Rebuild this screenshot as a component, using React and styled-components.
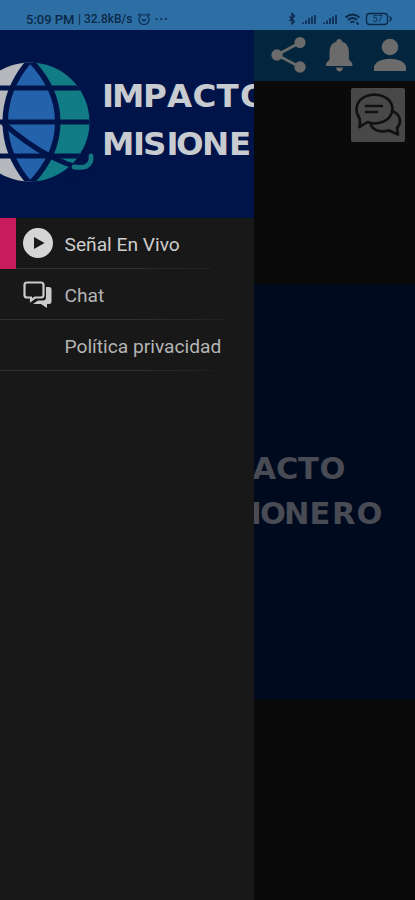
import React from "react";
import styled, { createGlobalStyle } from "styled-components";

const menuItems = [
  { label: "Señal En Vivo", icon: "play", active: true, line: 212 },
  { label: "Chat", icon: "chat", line: 225 },
  { label: "Política privacidad", line: 212 },
];

const TitleLines = ({ lines, size, color }) => (
  <g fill={color} fontFamily="'DejaVu Sans', sans-serif" fontWeight="700" fontSize={size}>
    {lines.map((l) => (
      <text key={l.text} x={l.x.join(" ")} y={l.y}>{l.text}</text>
    ))}
  </g>
);

const StatusIcons = () => (
  <svg width="110" height="16" viewBox="284 11 110 16" fill="none" stroke="#0b2848">
    <path d="M289.5 16.5l5 5-2.5 2.5V13.5l2.5 2.5-5 5" strokeWidth="1.3" />
    <path d="M303 24v-1.5M306 24v-3.5M309 24v-6M312 24v-7.5M315 24v-9" strokeWidth="2" opacity="0.8" />
    <path d="M324 24v-1.5M327 24v-3.5M330 24v-6M333 24v-7.5M336 24v-9" strokeWidth="2" opacity="0.8" />
    <path d="M345.5 17.5q7-6 14 0M348 20q4.5-4 9 0M350.5 22.5q2-1.8 4 0M356.5 22.5l2 2" strokeWidth="1.8" />
    <rect x="366.5" y="13.5" width="21" height="11" rx="3" strokeWidth="1.3" />
    <path d="M389.500 16.500l2 2.300-2 2.500" strokeWidth="1.3" />
    <text x="372.5" y="22.3" fill="#0b2848" stroke="none" fontSize="9" fontFamily="Roboto, sans-serif">57</text>
  </svg>
);

const AlarmIcon = () => (
  <svg width="14" height="14" viewBox="0 0 14 14" fill="none" stroke="#0b2848" strokeWidth="1.1">
    <circle cx="7" cy="7.5" r="5" />
    <path d="M1 3.5l2.5-2M13 3.5l-2.5-2M4.8 7l2.2 2 2.2-2" />
  </svg>
);

const Globe = () => (
  <>
    <clipPath id="globe"><circle cx="30" cy="92" r="59.5" /></clipPath>
    <g clipPath="url(#globe)">
      <rect x="-30" y="32" width="60" height="120" fill="#b5b9bd" />
      <rect x="30" y="32" width="60" height="120" fill="#117b86" />
      <path d="M30 30C-3 68-3 116 30 154C67 116 67 68 30 30Z" fill="#2462ab" stroke="#001449" strokeWidth="5.5" />
      <path d="M-30 58H90M-30 92H90M-30 126H90" stroke="#001449" strokeWidth="5" />
    </g>
    <path d="M68 138L79 128L82 120L92 118V142L66 150Z" fill="#001449" />
    <path d="M3 93Q28 115 50 126T74 135" fill="none" stroke="#001449" strokeWidth="5" />
    <path d="M74 137Q82 138 86 136.500Q92 133 91 126" fill="none" stroke="#127683" strokeWidth="4.8" strokeLinecap="round" />
  </>
);

const MenuIcon = ({ name }) => {
  if (name === "play")
    return (
      <svg width="30" height="30" viewBox="0 0 30 30">
        <circle cx="15" cy="15" r="15" fill="#d5d5d5" />
        <path d="M11 9v12l10.5-6z" fill="#181818" />
      </svg>
    );
  if (name === "chat")
    return (
      <svg width="30" height="30" viewBox="0 0 30 30">
        <path d="M23 8h3q2.500 0 2.500 2.500v12q0 2.500-2.500 2.500h-2v4l-6-4h-8l5-3.500h5q3 0 3-3.500z" fill="#cbcbcb" />
        <path d="M4 3.500h14q2.500 0 2.500 2.500v10q0 2.500-2.500 2.500h-6l-4 3v-3H4q-2.500 0-2.500-2.500V6Q1.500 3.500 4 3.500z" fill="#181818" stroke="#cbcbcb" strokeWidth="2.2" />
      </svg>
    );
  return null;
};

const ToolbarIcons = () => (
  <svg width="161" height="51" viewBox="254 30 161 51" fill="#6b6b6b">
    <path d="M300 42.5L277 55l23 12" fill="none" stroke="#6b6b6b" strokeWidth="2.8" />
    <circle cx="300" cy="42.5" r="5.5" />
    <circle cx="277" cy="55" r="5.7" />
    <circle cx="300" cy="67" r="5.7" />
    <path d="M326 66v-2.5l3.5-4V52q0-8.500 7-10.500 0-2.500 2.700-2.500t2.700 2.500q7 2 7 10.500v7.500l3.500 4V66zM336 67.500h7q-.5 4-3.500 4t-3.500-4z" />
    <circle cx="390" cy="47" r="8.3" />
    <path d="M374 71v-3q0-5 6-7.500 10-3.500 20 0 6 2.500 6 7.500v3z" />
  </svg>
);

const ChatIcon = () => (
  <svg width="54" height="54" viewBox="351 88 54 54" fill="none" stroke="#111" strokeWidth="2.7" strokeLinejoin="round" strokeLinecap="round">
    <path d="M359.5 118q-3-4-3-9 1-13 18-14.500 17 1.500 18 14.500-1 13-18 14.500-4 0-7-1.500-3 2-8 5 1-4 0-9z" />
    <path d="M366 106h16M366 112h11" />
    <path d="M392 111q8 3 8 10 0 4-3 7l1 6.500-9-4q-13 3-18-5" />
  </svg>
);

const App = () => (
  <Screen>
    <GlobalStyle />
    <StatusBar>
      <StatusLeft>
        <Time>5:09 PM</Time>
        <Speed>| 32.8kB/s</Speed>
        <AlarmIcon />
        <Dots>•••</Dots>
      </StatusLeft>
      <StatusIcons />
    </StatusBar>
    <Page>
      <Toolbar><ToolbarIcons /></Toolbar>
      <ChatArea>
        <ChatButton><ChatIcon /></ChatButton>
      </ChatArea>
      <Banner>
        <svg width="415" height="415" viewBox="0 284 415 415">
          <TitleLines
            size={30.5}
            color="#484b54"
            lines={[
              { text: "IMPACTO", x: [192, 201, 229, 252.5, 276, 298, 319.5], y: 479 },
              { text: "MISIONERO", x: [192, 221, 229, 250.5, 260, 284, 309.5, 332, 356.5], y: 524 },
            ]}
          />
        </svg>
      </Banner>
      <Drawer>
        <DrawerHeader>
          <svg width="254" height="188" viewBox="0 0 254 188">
            <Globe />
            <TitleLines
              size={32.5}
              color="#c8cbd0"
              lines={[
                { text: "IMPACTO", x: [102, 112, 143, 167, 192.5, 216.5, 240], y: 77 },
                { text: "MISIONERO", x: [102, 133, 143, 166.5, 176, 202, 229, 257, 281], y: 125 },
              ]}
            />
          </svg>
        </DrawerHeader>
        {menuItems.map((item) => (
          <MenuRow key={item.label} $line={item.line}>
            <Marker $active={item.active} />
            <IconSlot><MenuIcon name={item.icon} /></IconSlot>
            <Label $active={item.active}>{item.label}</Label>
          </MenuRow>
        ))}
      </Drawer>
    </Page>
  </Screen>
);

export default App;

// STYLES

const GlobalStyle = createGlobalStyle`
  body {
    margin: 0;
    background: #0a0a0a;
  }
  svg {
    display: block;
    flex-shrink: 0;
  }
`;

const Screen = styled.div`
  display: flex;
  flex-direction: column;
  width: 415px;
  height: 900px;
  overflow: hidden;
  font-family: Roboto, sans-serif;
`;

const StatusBar = styled.div`
  display: flex;
  justify-content: space-between;
  align-items: flex-end;
  box-sizing: border-box;
  height: 30px;
  padding: 0 21px 3px 26px;
  background: #2d6fa5;
  color: #0b2848;
`;

const StatusLeft = styled.div`
  display: flex;
  align-items: center;
  height: 16px;
  white-space: nowrap;
`;

const Time = styled.span`
  width: 52px;
  font-size: 13px;
  font-weight: 500;
`;

const Speed = styled.span`
  width: 59px;
  font-size: 12px;
  font-weight: 500;
`;

const Dots = styled.span`
  margin-left: 4px;
  font-size: 9px;
  letter-spacing: 1.7px;
`;

const Page = styled.div`
  position: relative;
  flex: 1;
  background: #0a0a0a;
`;

const Toolbar = styled.div`
  display: flex;
  justify-content: flex-end;
  height: 51px;
  background: #03253d;
`;

const ChatArea = styled.div`
  display: flex;
  justify-content: flex-end;
  align-items: flex-start;
  box-sizing: border-box;
  height: 203px;
  padding: 7px 10px 0 0;
`;

const ChatButton = styled.div`
  width: 54px;
  height: 54px;
  border-radius: 2px;
  background: #484848;
`;

const Banner = styled.div`
  height: 415px;
  background: #000a1e;
`;

const Drawer = styled.div`
  position: absolute;
  top: 0;
  left: 0;
  width: 254px;
  height: 100%;
  overflow: hidden;
  background: #181818;
`;

const DrawerHeader = styled.div`
  height: 188px;
  background: #001449;
`;

const MenuRow = styled.div`
  display: flex;
  align-items: center;
  height: 51px;
  background: linear-gradient(to right, #303030, #303030 60%, #202020) bottom left / ${(p) => p.$line}px 1px no-repeat;
`;

const Marker = styled.div`
  width: 16px;
  height: 51px;
  background: ${(p) => (p.$active ? "#c91c5e" : "transparent")};
`;

const IconSlot = styled.div`
  width: 30px;
  height: 30px;
  margin: 0 12px 1px 6.5px;
`;

const Label = styled.span`
  padding-top: 1px;
  font-size: 19.2px;
  color: ${(p) => (p.$active ? "#cecece" : "#b4b4b4")};
`;
